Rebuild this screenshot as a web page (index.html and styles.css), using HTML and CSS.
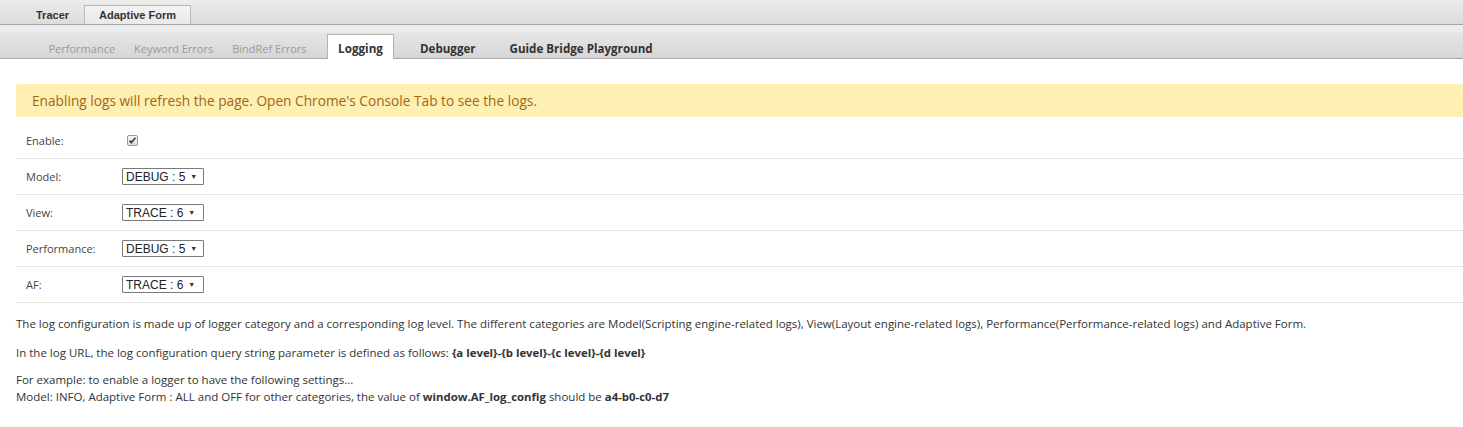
FILE: index.html
```html
<!DOCTYPE html>
<html>
<head>
<meta charset="utf-8">
<link rel="stylesheet" href="styles.css">
</head>
<body>
<div class="topbar">
  <div class="ttab">Tracer</div>
  <div class="ttab active">Adaptive Form</div>
</div>
<div class="subbar">
  <div class="stab dim">Performance</div>
  <div class="stab dim">Keyword Errors</div>
  <div class="stab dim">BindRef Errors</div>
  <div class="stab active">Logging</div>
  <div class="stab bold debugger">Debugger</div>
  <div class="stab bold guide">Guide Bridge Playground</div>
</div>
<div class="content">
  <div class="banner">Enabling logs will refresh the page. Open Chrome's Console Tab to see the logs.</div>
  <div class="rows">
    <div class="row">
      <div class="label">Enable:</div>
      <svg class="check" width="11" height="11" viewBox="0 0 11 11">
        <defs>
          <linearGradient id="cbg" x1="0" y1="0" x2="0" y2="1">
            <stop offset="0" stop-color="#fafafa"/>
            <stop offset="1" stop-color="#dcdcdc"/>
          </linearGradient>
        </defs>
        <rect x="0.5" y="0.5" width="10" height="10" rx="1.5" fill="url(#cbg)" stroke="#9a9a9a"/>
        <path d="M2.6 5.6 L4.4 7.6 L8.4 2.8" fill="none" stroke="#444" stroke-width="1.7"/>
      </svg>
    </div>
    <div class="row">
      <div class="label">Model:</div>
      <div class="select"><span>DEBUG : 5</span><span class="arrow">▼</span></div>
    </div>
    <div class="row">
      <div class="label">View:</div>
      <div class="select"><span>TRACE : 6</span><span class="arrow">▼</span></div>
    </div>
    <div class="row">
      <div class="label">Performance:</div>
      <div class="select"><span>DEBUG : 5</span><span class="arrow">▼</span></div>
    </div>
    <div class="row">
      <div class="label">AF:</div>
      <div class="select"><span>TRACE : 6</span><span class="arrow">▼</span></div>
    </div>
  </div>
  <p class="p1">The log configuration is made up of logger category and a corresponding log level. The different categories are Model(Scripting engine-related logs), View(Layout engine-related logs), Performance(Performance-related logs) and Adaptive Form.</p>
  <p class="p2">In the log URL, the log configuration query string parameter is defined as follows: <b>{a level}-{b level}-{c level}-{d level}</b></p>
  <p class="p3">For example: to enable a logger to have the following settings...<br>Model: INFO, Adaptive Form : ALL and OFF for other categories, the value of <b>window.AF_log_config</b> should be <b>a4-b0-c0-d7</b></p>
</div>
</body>
</html>
```
FILE: styles.css
```css
html, body {
  margin: 0;
  padding: 0;
  background: #fff;
}
body {
  font-family: "Open Sans", "Noto Sans", sans-serif;
  color: #333;
  width: 1463px;
  overflow: hidden;
}
.topbar {
  height: 24px;
  display: flex;
  align-items: flex-end;
  padding-left: 21px;
  background: linear-gradient(#ececec, #dcdcdc);
  border-bottom: 1px solid #a3a3a3;
}
.ttab {
  font-family: "Liberation Sans", Arial, sans-serif;
  font-weight: bold;
  font-size: 11px;
  color: #333;
  height: 18px;
  line-height: 18px;
  padding: 0 14px;
  border: 1px solid transparent;
  border-bottom: none;
}
.ttab.active {
  background: linear-gradient(#f3f3f3, #e9e9e9);
  border-color: #b9b9b9;
}
.subbar {
  height: 33px;
  display: flex;
  align-items: flex-end;
  padding-left: 39px;
  background: linear-gradient(#ececec 0, #ececec 7px, #e6e6e6 8px, #d6d6d6 100%);
  border-bottom: 1px solid #a6a6a6;
}
.stab {
  font-size: 11px;
  height: 23px;
  line-height: 27px;
  padding: 0 9.5px;
}
.stab.dim {
  color: #9a9a9a;
}
.stab.active {
  margin-left: 11px;
  padding: 0 10px;
  background: #fff;
  border: 1px solid #b3b3b3;
  border-bottom: none;
  font-weight: bold;
  font-size: 11.7px;
  color: #333;
  height: 24px;
  margin-bottom: -1px;
}
.stab.bold {
  font-weight: bold;
  font-size: 11.6px;
  color: #333;
  padding: 0;
}
.stab.debugger { margin-left: 26px; }
.stab.guide { margin-left: 34px; }
.content {
  padding-left: 16px;
  padding-top: 25px;
}
.banner {
  height: 33px;
  line-height: 33px;
  background: #feefb3;
  color: #a56614;
  font-size: 13.7px;
  padding-left: 16px;
  border-radius: 3px 0 0 3px;
}
.rows {
  margin-top: 6px;
}
.row {
  height: 35px;
  display: flex;
  align-items: center;
  border-bottom: 1px solid #e6e6e6;
  padding-left: 10px;
}
.label {
  width: 96px;
  font-size: 11px;
  color: #444;
}
.check {
  margin-left: 5px;
}
.select {
  box-sizing: border-box;
  width: 82px;
  height: 17px;
  border: 1px solid #7a7a7a;
  border-radius: 1px;
  display: flex;
  align-items: center;
  padding-left: 3px;
  font-family: "Liberation Sans", Arial, sans-serif;
  font-size: 12px;
  color: #222;
  background: #fff;
}
.select .arrow {
  font-size: 7px;
  margin-left: 5px;
  color: #333;
}
p {
  margin: 0;
  font-size: 11.5px;
  line-height: 17px;
  color: #333;
}
p b {
  font-size: 11.4px;
}
.p1 { margin-top: 12px; }
.p2 { margin-top: 12px; }
.p3 { margin-top: 10px; }
```
